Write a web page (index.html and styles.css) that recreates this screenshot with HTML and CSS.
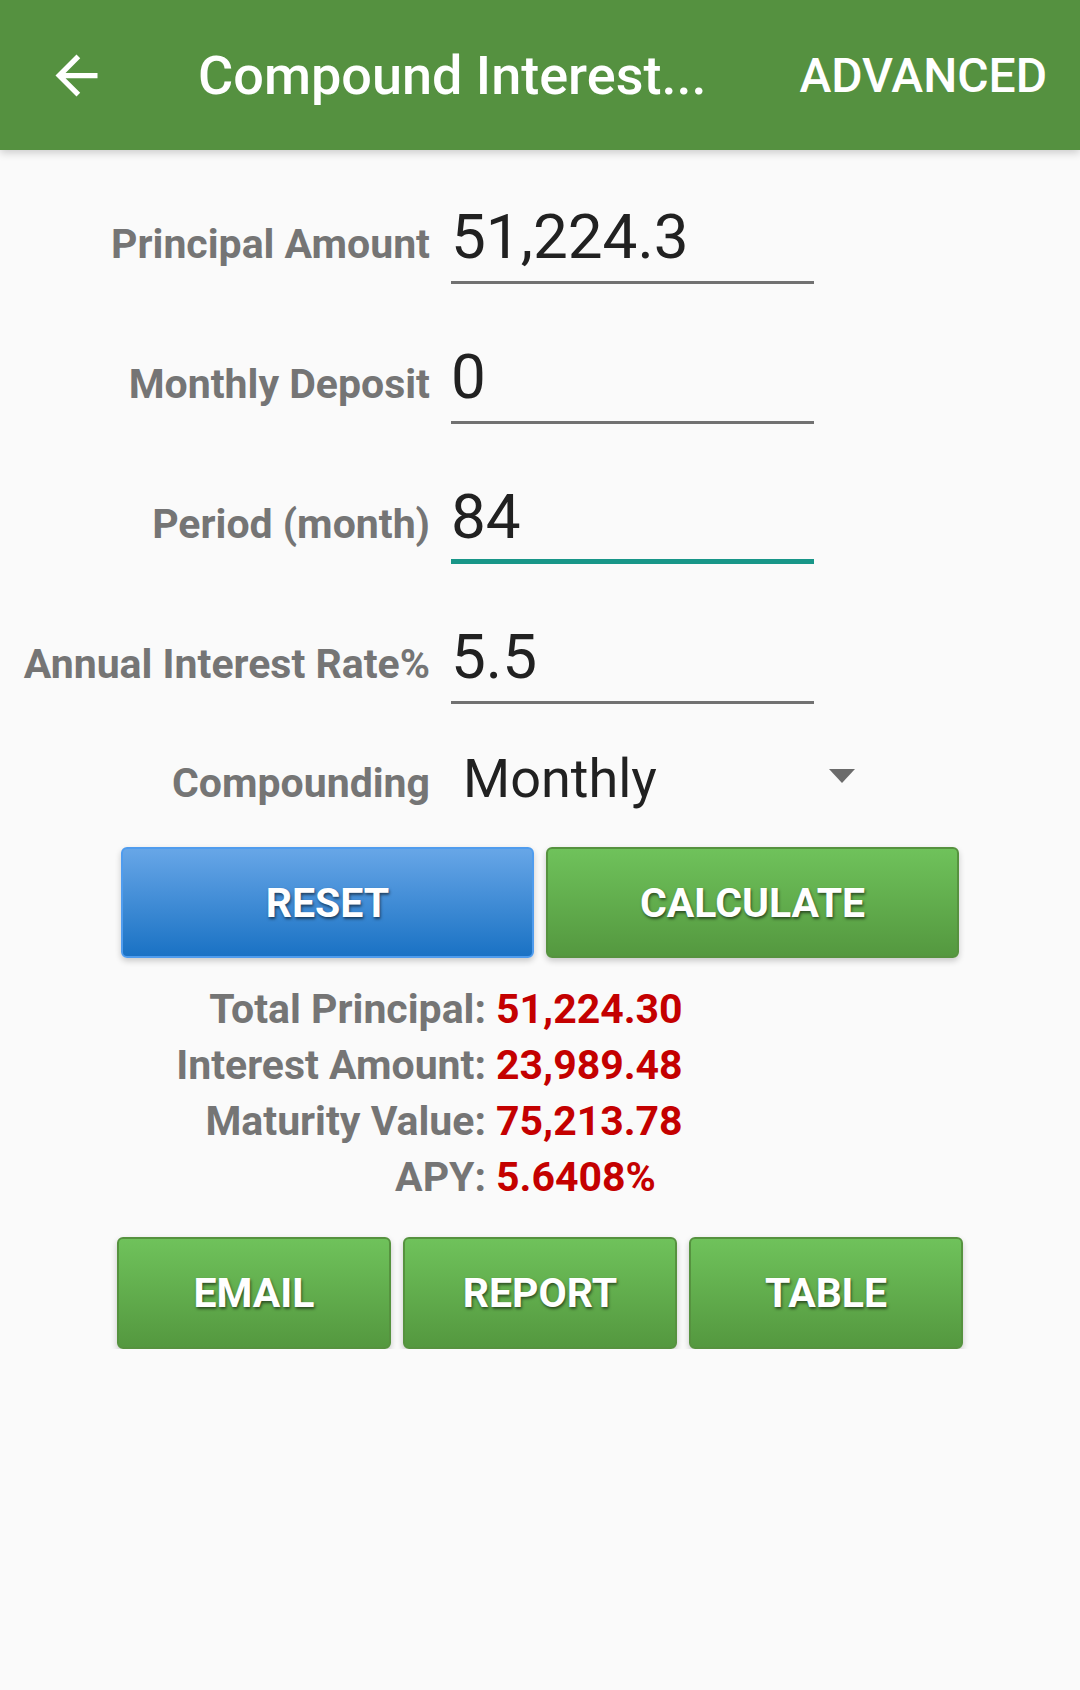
FILE: index.html
```html
<!DOCTYPE html>
<html lang="en">
<head>
  <meta charset="UTF-8" />
  <meta name="viewport" content="width=device-width, initial-scale=1.0"/>
  <title>Compound Interest Calculator</title>
  <link rel="stylesheet" href="styles.css">
</head>
<body>
  <header class="toolbar">
    <svg class="nav-icon" viewBox="0 0 24 24" aria-hidden="true">
      <path d="M20 11H7.83l5.59-5.59L12 4l-8 8 8 8 1.41-1.41L7.83 13H20v-2z" fill="#fff"/>
    </svg>
    <h1 class="title">Compound Interest...</h1>
    <span class="menu-item">ADVANCED</span>
  </header>

  <main class="calc">
    <div class="field-row">
      <label class="field-label">Principal Amount</label>
      <div class="field-input">51,224.3</div>
    </div>
    <div class="field-row">
      <label class="field-label">Monthly Deposit</label>
      <div class="field-input">0</div>
    </div>
    <div class="field-row">
      <label class="field-label">Period (month)</label>
      <div class="field-input focused">84</div>
    </div>
    <div class="field-row">
      <label class="field-label">Annual Interest Rate%</label>
      <div class="field-input">5.5</div>
    </div>
    <div class="field-row spinner-row">
      <label class="field-label">Compounding</label>
      <div class="spinner">
        <span>Monthly</span>
        <span class="caret"></span>
      </div>
    </div>

    <div class="btn-row main-btns">
      <button class="btn blue">RESET</button>
      <button class="btn green">CALCULATE</button>
    </div>

    <div class="results">
      <span class="res-label">Total Principal:</span><span class="res-value">51,224.30</span>
      <span class="res-label">Interest Amount:</span><span class="res-value">23,989.48</span>
      <span class="res-label">Maturity Value:</span><span class="res-value">75,213.78</span>
      <span class="res-label">APY:</span><span class="res-value">5.6408%</span>
    </div>

    <div class="btn-row extra-btns">
      <button class="btn green">EMAIL</button>
      <button class="btn green">REPORT</button>
      <button class="btn green">TABLE</button>
    </div>
  </main>
</body>
</html>
```

FILE: styles.css
```css
body {
  margin: 0;
  font-family: Roboto, 'Noto Sans', sans-serif;
  background: #fafafa;
  color: #212121;
}

.toolbar {
  height: 150px;
  display: flex;
  align-items: center;
  background: #559140;
  color: #fff;
  box-shadow: 0 3px 8px rgba(0, 0, 0, 0.18);
}

.nav-icon {
  width: 63px;
  height: 63px;
  margin-left: 45px;
}

.title {
  margin: 0 0 0 90px;
  font-size: 54px;
  font-weight: 500;
  white-space: nowrap;
}

.menu-item {
  margin-left: auto;
  padding-right: 33px;
  font-size: 48px;
  font-weight: 500;
}

.calc {
  padding-top: 55px;
}

.field-row {
  display: flex;
  align-items: baseline;
}

.field-row + .field-row {
  margin-top: 61px;
}

.field-label {
  width: 430px;
  margin-right: 21px;
  text-align: right;
  font-size: 41px;
  font-weight: 700;
  color: #757575;
  white-space: nowrap;
}

.field-input {
  width: 363px;
  padding: 0 0 13px 0;
  font-size: 62px;
  line-height: 63px;
  border-bottom: 3px solid #717171;
}

.field-input.focused {
  padding-bottom: 11px;
  border-bottom: 5px solid #189688;
}

.field-row.spinner-row {
  margin-top: 47px;
}

.spinner {
  width: 392px;
  padding: 0 15px 0 12px;
  display: flex;
  align-items: center;
  font-size: 54px;
  line-height: 55px;
}

.caret {
  margin-left: auto;
  margin-bottom: 5px;
  width: 0;
  height: 0;
  border-left: 13.5px solid transparent;
  border-right: 13.5px solid transparent;
  border-top: 14px solid #6b6b6b;
}

.btn-row {
  display: flex;
  justify-content: center;
  gap: 12px;
}

.main-btns {
  margin-top: 40px;
}

.main-btns .btn {
  width: 413px;
  height: 111px;
}

.extra-btns {
  margin-top: 32px;
}

.extra-btns .btn {
  width: 274px;
  height: 112px;
}

.btn {
  border-radius: 6px;
  border: 2px solid;
  font-family: Roboto, sans-serif;
  font-size: 41px;
  font-weight: 700;
  color: #fff;
  text-shadow: 1px 2px 3px rgba(0, 0, 0, 0.55);
  box-shadow: 0 3px 6px rgba(0, 0, 0, 0.2);
  cursor: pointer;
}

.btn.blue {
  background: linear-gradient(#67a6e7, #1a72c4);
  border-color: #4f9cee;
}

.btn.green {
  background: linear-gradient(#6fc25b, #54983f);
  border-color: #56923f;
}

.results {
  margin-top: 23px;
  display: grid;
  grid-template-columns: 486px auto;
  column-gap: 10px;
  font-size: 41px;
  font-weight: 700;
  line-height: 56px;
}

.res-label {
  text-align: right;
  color: #757575;
}

.res-value {
  color: #c40000;
}
```
